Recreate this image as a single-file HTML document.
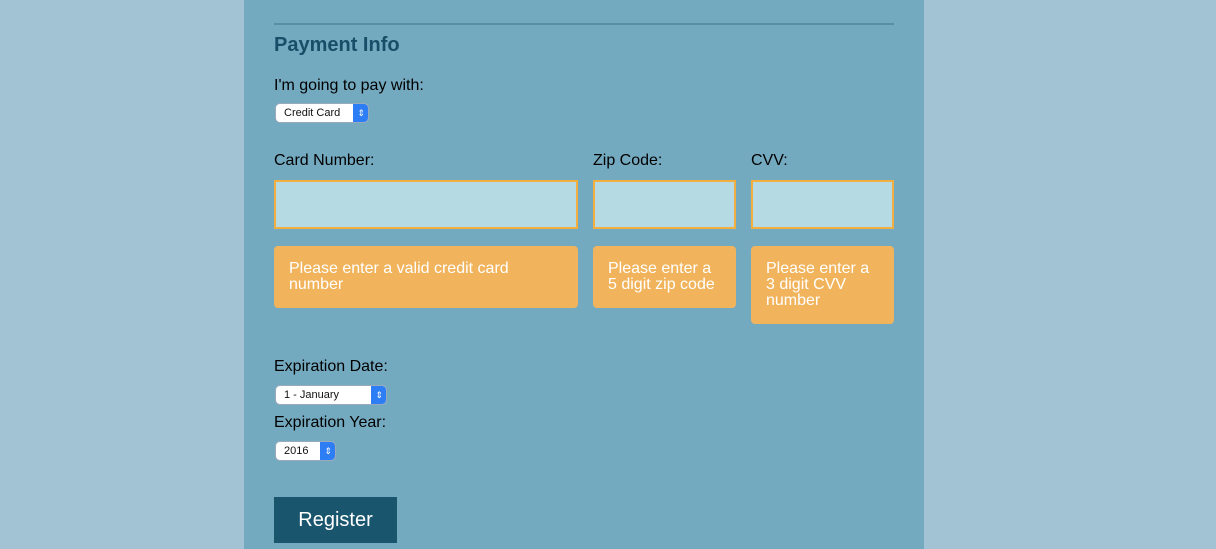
<!DOCTYPE html>
<html><head><style>
*{box-sizing:border-box;margin:0;padding:0}
body{width:1216px;height:549px;background:#a1c3d3;font-family:"Liberation Sans",sans-serif;overflow:hidden;position:relative}
.panel{position:absolute;left:244px;top:0;width:680px;height:549px;background:#74aac0}
.a{position:absolute}
.line{left:274px;top:23px;width:620px;height:2px;background:#5a8ea4}
h2{position:absolute;left:274px;top:34px;font-size:20px;font-weight:bold;color:#184f68}
.lbl{position:absolute;font-size:16px;color:#000}
.sel{position:absolute;height:18px;background:#fff;border-radius:4px;font-size:11px;line-height:18px;padding-left:8px;color:#111;box-shadow:0 0 0 1px #9ab}
.sel:after{content:"";position:absolute;right:0;top:0;width:15px;height:18px;background:#2d7df5;border-radius:0 4px 4px 0}
.sel b{position:absolute;right:3px;top:0;z-index:1;color:#fff;font-size:9px;font-weight:normal;line-height:18px}
.inp{position:absolute;top:180px;height:49px;background:#b6dae4;border:2px solid #f2ae3e}
.tip{position:absolute;top:246px;background:#f1b45c;border-radius:4px;color:#fff;font-size:16px;line-height:16px;padding:15px 15px}
.btn{position:absolute;left:274px;top:497px;width:123px;height:46px;background:#19566e;color:#fff;font-size:20px;text-align:center;line-height:46px}
</style></head><body>
<div class="panel"></div>
<div class="a line"></div>
<h2>Payment Info</h2>
<div class="lbl" style="left:274px;top:77px">I'm going to pay with:</div>
<div class="sel" style="left:276px;top:104px;width:92px">Credit Card<b>⇕</b></div>
<div class="lbl" style="left:274px;top:152px">Card Number:</div>
<div class="lbl" style="left:593px;top:152px">Zip Code:</div>
<div class="lbl" style="left:751px;top:152px">CVV:</div>
<div class="inp" style="left:274px;width:304px"></div>
<div class="inp" style="left:593px;width:143px"></div>
<div class="inp" style="left:751px;width:143px"></div>
<div class="tip" style="left:274px;width:304px;height:62px">Please enter a valid credit card number</div>
<div class="tip" style="left:593px;width:143px;height:62px">Please enter a 5 digit zip code</div>
<div class="tip" style="left:751px;width:143px;height:78px">Please enter a 3 digit CVV number</div>
<div class="lbl" style="left:274px;top:358px">Expiration Date:</div>
<div class="sel" style="left:276px;top:386px;width:110px">1 - January<b>⇕</b></div>
<div class="lbl" style="left:274px;top:414px">Expiration Year:</div>
<div class="sel" style="left:276px;top:442px;width:59px">2016<b>⇕</b></div>
<div class="btn">Register</div>
</body></html>
